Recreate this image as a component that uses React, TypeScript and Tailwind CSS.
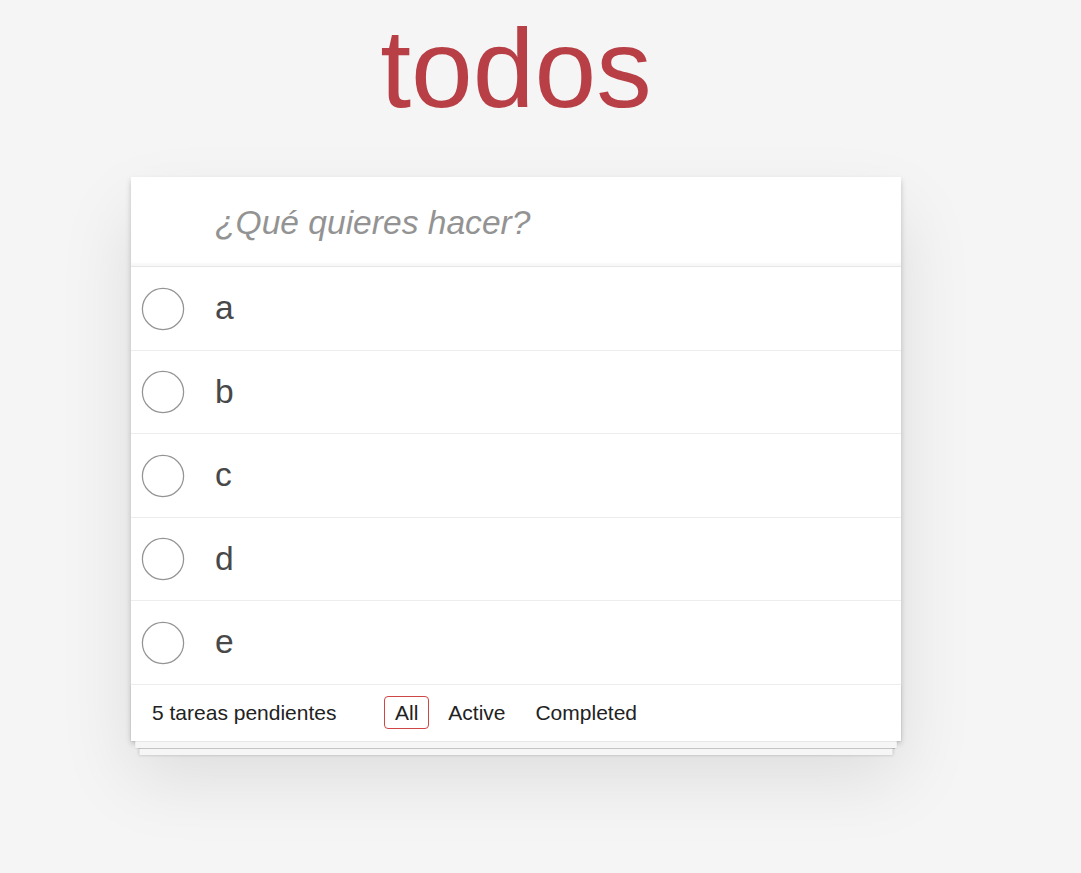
const todos = ['a', 'b', 'c', 'd', 'e'];

function Toggle() {
  return (
    <svg width="44" height="44" viewBox="0 0 44 44" className="shrink-0">
      <circle cx="22" cy="22" r="20.6" fill="none" stroke="#949494" strokeWidth="1.25" />
    </svg>
  );
}

export default function App() {
  return (
    <div className="min-h-screen bg-[#f5f5f5] font-['Liberation_Sans',Arial,sans-serif] text-[#111111]">
      <div className="ml-[131px] w-[770px]">
        <h1 className="pt-[13px] h-[124px] text-center text-[111px] leading-[112px] text-[#b83f45]">
          todos
        </h1>

        <section className="mt-[53px] bg-white shadow-[0_2.8px_5.6px_0_rgba(0,0,0,0.2),0_35px_70px_0_rgba(0,0,0,0.1)]">
          <div className="h-[90px] flex items-center pl-[84px] pt-[3px] shadow-[inset_0_-2.8px_1.4px_rgba(0,0,0,0.03)] border-b border-[#e6e6e6]">
            <span className="text-[33.6px] italic text-[#939393]">¿Qué quieres hacer?</span>
          </div>

          <ul>
            {todos.map((t) => (
              <li key={t} className="h-[83.5px] flex items-center border-b border-[#ededed]">
                <div className="ml-[10px] mt-[1px]">
                  <Toggle />
                </div>
                <span className="ml-[30px] text-[33.6px] text-[#484848]">{t}</span>
              </li>
            ))}
          </ul>

          <footer className="h-[56px] px-[21px] grid grid-cols-[1fr_auto_1fr] items-center text-[21px] text-[#222] shadow-[0_1.4px_1.4px_rgba(0,0,0,0.2),0_11.2px_0_-4.2px_#f6f6f6,0_12.6px_1.4px_-4.2px_rgba(0,0,0,0.2),0_22.4px_0_-8.4px_#f6f6f6,0_23.8px_2.8px_-8.4px_rgba(0,0,0,0.2)]">
            <span className="leading-[28px]">5 tareas pendientes</span>
            <div className="flex">
              <a className="mx-[4.2px] px-[9.8px] py-[4.2px] leading-[23px] border border-[#ce4646] rounded-[4px]">All</a>
              <a className="mx-[4.2px] px-[9.8px] py-[4.2px] leading-[23px] border border-transparent rounded-[4px]">Active</a>
              <a className="mx-[4.2px] px-[9.8px] py-[4.2px] leading-[23px] border border-transparent rounded-[4px]">Completed</a>
            </div>
            <span />
          </footer>
        </section>
      </div>
    </div>
  );
}
